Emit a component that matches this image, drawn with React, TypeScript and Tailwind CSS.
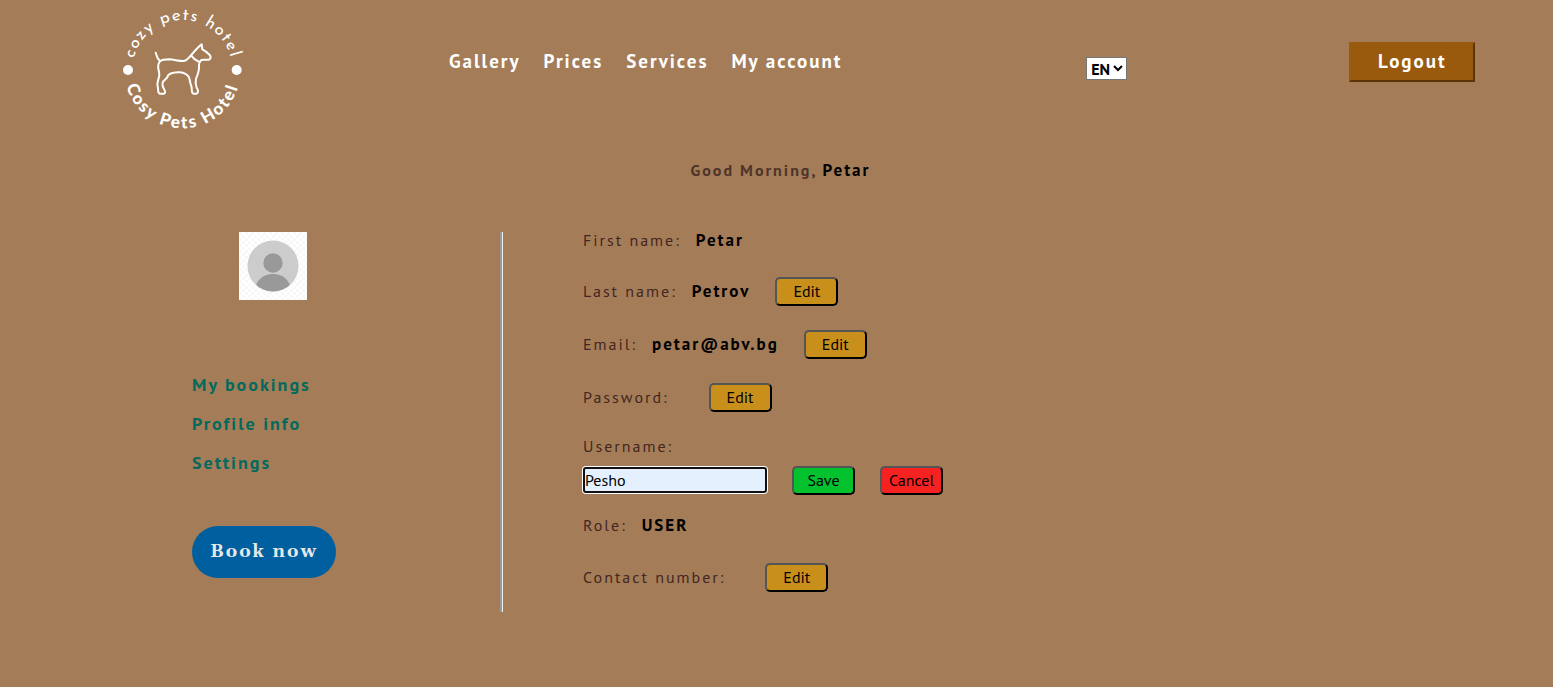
import { useState, type ReactNode } from "react";

const navLinks = ["Gallery", "Prices", "Services", "My account"];
const sideLinks = ["My bookings", "Profile info", "Settings"];

function Logo() {
  return (
    <svg viewBox="36 24 363 363" className="size-[121px] overflow-visible" role="img" aria-label="Cosy Pets Hotel" fill="none">
      <defs>
        <path id="logo-top" d="M67 250 V210 A150 150 0 0 1 367 210 V250" />
        <path id="logo-bottom" d="M42 170 V210 A175 175 0 0 0 392 210 V170" />
      </defs>
      <text className="fill-white font-['Josefin_Sans','Lato',sans-serif] tracking-[4px]" fontSize="51" textAnchor="middle">
        <textPath href="#logo-top" startOffset="50%">cozy pets hotel</textPath>
      </text>
      <text className="fill-white font-['Lato',sans-serif] font-black tracking-[6px]" fontSize="51" textAnchor="middle">
        <textPath href="#logo-bottom" startOffset="50%">Cosy Pets Hotel</textPath>
      </text>
      <circle cx="54" cy="210" r="15" fill="white" />
      <circle cx="380" cy="210" r="15" fill="white" />
      <g stroke="white" strokeWidth="6" strokeLinecap="round" strokeLinejoin="round">
        <path d="M137 158 C139 169 143 176 150 184 C156 179 166 178 178 178 C194 179 208 184 222 183 C232 181 237 172 244 165 C254 154 263 141 275 133 L277 148 C285 152 292 157 297 163 C303 168 303 174 299 178 C293 181 281 178 274 180 C269 184 267 190 267 197 C268 214 264 223 258 236 C256 245 257 256 260 264 C265 269 266 278 260 281 L250 281 C242 276 247 266 244 258 C239 249 241 238 236 230 C230 222 219 217 206 217 C194 217 183 219 175 225 C173 234 165 238 159 245 C155 254 159 263 164 271 C167 277 165 281 160 281 L149 281 C141 276 146 267 143 259 C139 248 148 235 148 224 C148 211 142 207 145 194 C146 189 147 187 150 184" />
        <path d="M243 166 C249 174 256 181 266 185" />
      </g>
    </svg>
  );
}

function Avatar() {
  return (
    <svg viewBox="0 0 68 68" className="ml-[47px] size-17" role="img" aria-label="Profile picture">
      <defs>
        <pattern id="checks" width="6" height="6" patternUnits="userSpaceOnUse">
          <rect width="6" height="6" fill="#fff" />
          <path d="M0 0h3v3H0zM3 3h3v3H3z" fill="#f8f8f8" />
        </pattern>
        <clipPath id="disc">
          <circle cx="34" cy="34" r="25.500" />
        </clipPath>
      </defs>
      <rect width="68" height="68" fill="url(#checks)" />
      <circle cx="34" cy="34" r="25.500" fill="#ccc" />
      <g clipPath="url(#disc)" fill="#999">
        <circle cx="34" cy="31" r="9.700" />
        <ellipse cx="34" cy="56" rx="17" ry="14" />
      </g>
    </svg>
  );
}

function ActionButton({ color, children }: { color: string; children: ReactNode }) {
  return (
    <button
      type="button"
      className={`h-[29px] w-[63px] rounded-[5px] border-2 border-t-[#555] border-r-black border-b-black border-l-[#555] text-base leading-none text-black ${color}`}
    >
      {children}
    </button>
  );
}

function Field({ label, value, editable, className }: { label: string; value?: string; editable?: boolean; className?: string }) {
  return (
    <div className={`flex items-center leading-4 ${className ?? ""}`}>
      <dt className="mr-[15px] tracking-[2px]">{label}:</dt>
      <dd className="flex items-center">
        <strong className="text-[17px] tracking-[2px] text-black">{value}</strong>
        {editable && (
          <span className="ml-[25px]">
            <ActionButton color="bg-[#c98f1b]">Edit</ActionButton>
          </span>
        )}
      </dd>
    </div>
  );
}

export default function App() {
  const [username, setUsername] = useState("Pesho");
  return (
    <div className="min-h-screen bg-[#a47d58] font-['PT_Sans','Lato',sans-serif] text-base text-[#43261f]">
      <header className="grid grid-cols-[327fr_637fr_263fr_126px] items-center pt-2 pr-[5%] pl-[7.85%]">
        <Logo />
        <nav className="-mt-3.5 flex gap-[23px] text-[19px] font-bold tracking-[2px] text-white">
          {navLinks.map((item) => (
            <a key={item} href="#">{item}</a>
          ))}
        </nav>
        <div>
          <select aria-label="Language" className="h-[23px] w-[41px] border border-[#767676] bg-white text-base leading-5 font-bold text-black">
            <option>EN</option>
            <option>BG</option>
          </select>
        </div>
        <button type="button" className="-mt-3.5 h-10 border-2 border-t-[#9a5a0e] border-r-[#5a3408] border-b-[#5a3408] border-l-[#9a5a0e] bg-[#9a5a0e] text-[19px] leading-none font-bold tracking-[2px] text-white">
          Logout
        </button>
      </header>

      <h1 className="mt-[29px] pl-2 text-center font-bold tracking-[2px] text-[#4f342a]">
        Good Morning, <span className="text-[17px] text-black">Petar</span>
      </h1>

      <main className="mt-12 grid grid-cols-[500fr_1053fr] pb-16">
        <aside className="pl-[38.4%]">
          <Avatar />
          <ul className="mt-[71px] flex flex-col gap-3 text-lg leading-[27px] font-bold tracking-[2px] text-[#05695c]">
            {sideLinks.map((item) => (
              <li key={item}>
                <a href="#">{item}</a>
              </li>
            ))}
          </ul>
          <button type="button" className="mt-[50px] h-[52px] w-36 rounded-full bg-[#005f9e] font-['Georgia','Gelasio','PT_Serif',serif] text-lg font-bold tracking-[2px] text-[#e8e8e8]">
            Book now
          </button>
        </aside>

        <section className="flex min-h-[380px]">
          <div className="w-[3px] border-r border-l-2 border-r-[#eee] border-l-[#9a9a9a]" />
          <div className="pl-20">
            <dl>
              <Field label="First name" value="Petar" />
              <Field label="Last name" value="Petrov" editable className="mt-[29px]" />
              <Field label="Email" value="petar@abv.bg" editable className="mt-6" />
              <Field label="Password" editable className="mt-6" />
            </dl>
            <form className="mt-[26px]" onSubmit={(e) => e.preventDefault()}>
              <label htmlFor="username" className="block leading-4 tracking-[2px]">Username:</label>
              <div className="mt-3 flex items-center gap-[25px]">
                <input
                  id="username"
                  value={username}
                  onChange={(e) => setUsername(e.target.value)}
                  className="h-[26px] w-[184px] rounded-[3px] border-2 border-[#101010] bg-[#e5f0ff] text-base text-black ring-1 ring-white outline-none"
                />
                <ActionButton color="bg-[#04c12e]">Save</ActionButton>
                <ActionButton color="bg-[#f62222]">Cancel</ActionButton>
              </div>
            </form>
            <dl>
              <Field label="Role" value="USER" className="mt-[22px]" />
              <Field label="Contact number" editable className="mt-[30px]" />
            </dl>
          </div>
        </section>
      </main>
    </div>
  );
}
